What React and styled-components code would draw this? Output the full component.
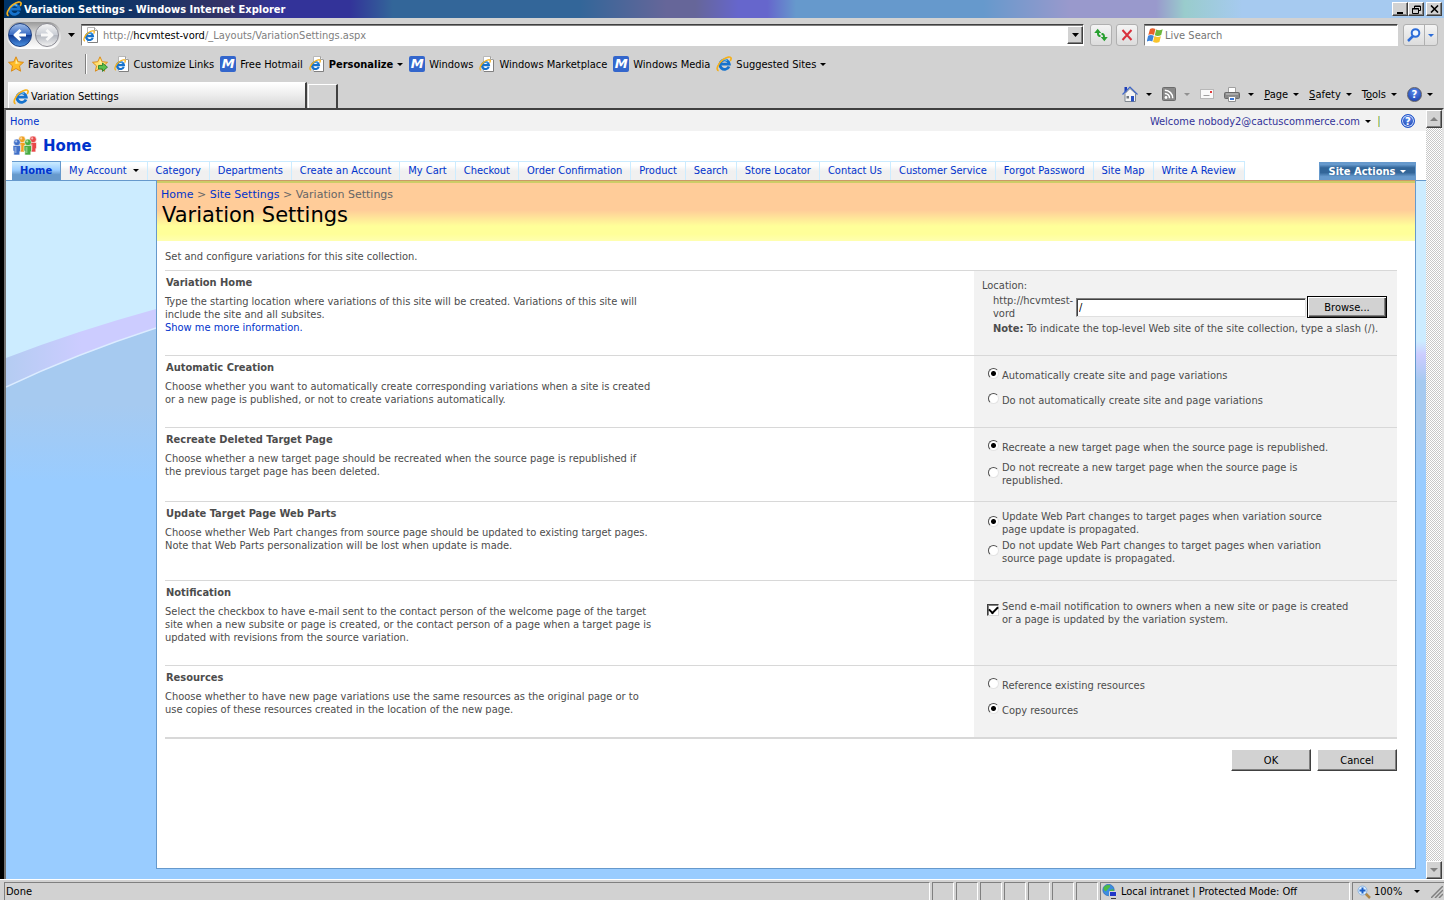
import React from 'react';
import styled, { createGlobalStyle, css } from 'styled-components';

const GlobalStyle = createGlobalStyle`
	* {
		box-sizing: border-box;
	}
	body {
		margin: 0;
		background: #d2d2d2;
		font: 11px/13px "DejaVu Sans Condensed", "Liberation Sans", sans-serif;
		color: #000;
	}
	button, input {
		font: inherit;
		color: inherit;
	}
	button {
		padding: 0;
	}
	a {
		text-decoration: none;
	}
	svg {
		display: block;
		flex: none;
	}
	p, h1, h2 {
		margin: 0;
	}
`;

/* window frame */

const Window = styled.div`
	display: flex;
	flex-direction: column;
	min-height: 100vh;
`;

const Frame = styled.div`
	flex: 1;
	display: flex;
	flex-direction: column;
	border-left: 4px solid #000;
`;

const TitleBar = styled.header`
	display: flex;
	align-items: center;
	gap: 2px;
	height: 18px;
	padding: 0 2px;
	color: #fff;
	font-weight: bold;
	background: linear-gradient(to right, #003366 5%, #333366 15%, #333399 19%, #333399 24%, #336699 27%, #336699 40%, #666699 46%, #666699 48%, #6666cc 51%, #6666cc 53%, #6699cc 55%, #6699cc 68%, #9999cc 74%, #9999cc 80%, #99cccc 82%, #a6caf0 86%);
`;

const TitleText = styled.span`
	flex: 1;
	white-space: nowrap;
`;

const raised = css`
	background: #d2d2d2;
	border: 1px solid;
	border-color: #fff #404040 #404040 #fff;
	box-shadow: inset -1px -1px 0 #808080;
`;

const WinButton = styled.button`
	${raised}
	display: flex;
	align-items: center;
	justify-content: center;
	width: 16px;
	height: 14px;
	margin-left: ${(p) => (p.$apart ? '0' : '-2px')};
`;

const NavRow = styled.div`
	display: flex;
	align-items: center;
	height: 34px;
	padding: 0 6px 0 3px;
`;

const TravelButtons = styled.div`
	display: flex;
	width: 54px;
	height: 27px;
	align-items: center;
	gap: 3px;
	padding: 0 1px;
	border-radius: 13px;
	background: linear-gradient(#999, #d8d8d8 40%, #fff);
`;

const RoundButton = styled.button`
	display: flex;
	align-items: center;
	justify-content: center;
	width: 24px;
	height: 24px;
	border: 1px solid ${(p) => (p.$off ? '#8c8c94' : '#1d3f80')};
	border-radius: 50%;
	background: ${(p) => (p.$off
		? 'linear-gradient(#f4f4f4, #c8ccd4 50%, #b4b8c0 52%, #f0f0f0)'
		: 'linear-gradient(#9dbbe8, #3a6cc4 48%, #123c94 52%, #4a90e0)')};
`;

const PlainButton = styled.button`
	display: flex;
	align-items: center;
	justify-content: center;
	gap: ${(p) => (p.$wide ? '8px' : '5px')};
	height: 20px;
	border: 0;
	background: none;
	white-space: nowrap;
`;

const HistoryButton = styled(PlainButton)`
	width: 20px;
`;

const sunken = css`
	background: #fff;
	border: 1px solid;
	border-color: #404040 #fff #fff #808080;
	box-shadow: inset 0 1px 0 #808080;
`;

const AddressBox = styled.div`
	${sunken}
	flex: 1;
	display: flex;
	align-items: center;
	gap: 4px;
	height: 22px;
	padding-left: 1px;
`;

const SearchInput = styled.input`
	flex: 1;
	min-width: 0;
	border: 0;
	outline: 0;
	background: none;
	padding: 0;
`;

const AddressText = styled.a`
	flex: 1;
	color: #808080;

	b {
		color: #000;
		font-weight: normal;
	}
`;

const DropButton = styled.button`
	${raised}
	display: flex;
	align-items: center;
	justify-content: center;
	width: 16px;
	height: 18px;
`;

const SoftButton = styled.button`
	display: flex;
	align-items: center;
	justify-content: center;
	width: 22px;
	height: 22px;
	border: 1px solid #b0b0b0;
	border-radius: 3px;
	background: linear-gradient(#f4f4f4, #dcdcdc);
	margin-left: ${(p) => p.$gap || 0}px;
`;

const SearchBox = styled.div`
	${sunken}
	display: flex;
	align-items: center;
	gap: 2px;
	width: 254px;
	height: 22px;
	margin-left: 6px;
	padding-left: 2px;
`;

const SearchButtons = styled.div`
	display: flex;
	margin-left: 5px;
	border: 1px solid #b0b0b0;
	border-radius: 3px;
	background: linear-gradient(#f4f4f4, #dcdcdc);

	button {
		display: flex;
		align-items: center;
		justify-content: center;
		height: 20px;
		width: 20px;
		border: 0;
		background: none;
	}
	button + button {
		width: 13px;
		border-left: 1px solid #b0b0b0;
	}
`;

const FavRow = styled.nav`
	display: flex;
	align-items: center;
	height: 24px;
	padding-left: 4px;
`;

const FavLink = styled.a`
	display: flex;
	align-items: center;
	gap: 4px;
	margin-right: 6px;
	color: #000;
	font-weight: ${(p) => (p.$bold ? 'bold' : 'normal')};
	white-space: nowrap;
`;

const Divider = styled.div`
	width: 2px;
	height: 20px;
	margin: 0 5px 0 6px;
	border-left: 1px solid #808080;
	border-right: 1px solid #fff;
`;

const TabRow = styled.div`
	display: flex;
	align-items: flex-end;
	height: 32px;
	padding-left: 4px;
`;

const BrowserTab = styled.button`
	display: flex;
	align-items: center;
	gap: 2px;
	width: 299px;
	height: 26px;
	padding: 2px 4px 0;
	border: 1px solid #fff;
	border-right: 2px solid #404040;
	border-bottom: 0;
	background: linear-gradient(#fff, #f0f0f0 40%, #d6d6d6);
`;

const NewTab = styled(BrowserTab)`
	width: 30px;
	height: 24px;
	margin-left: 1px;
	background: #d2d2d2;
`;

const CommandBar = styled.div`
	display: flex;
	align-items: center;
	gap: 10px;
	height: 28px;
	margin-left: auto;
	padding-right: 11px;
`;

/* site */

const Viewport = styled.div`
	flex: 1;
	display: flex;
	border: 2px solid;
	border-bottom: 0;
	border-color: #404040 #e4e4e4 #fff #707070;
`;

const Site = styled.div`
	flex: 1;
	min-width: 0;
	display: flex;
	flex-direction: column;
	background: #fff;
`;

const GlobalBar = styled.div`
	display: flex;
	align-items: center;
	height: 21px;
	padding: 1px 11px 0 4px;
	background: #f2f2f2;
`;

const BlueLink = styled.a`
	color: #0033cc;
`;

const Welcome = styled(PlainButton)`
	margin-left: auto;
	color: #333399;
`;

const Stroke = styled.span`
	width: 2px;
	height: 11px;
	margin: 0 21px 0 7px;
	border-left: 1px solid #cccc66;
	border-right: 1px solid #99cccc;
`;

const SiteTitle = styled.div`
	display: flex;
	align-items: center;
	gap: 6px;
	height: 30px;
	padding-left: 7px;
	font: bold 15px/20px "DejaVu Sans", sans-serif;
`;

const TopNav = styled.nav`
	display: flex;
	align-items: flex-end;
	height: 19px;
	padding: 0 10px 0 6px;
`;

const NavTab = styled.a`
	display: flex;
	align-items: center;
	gap: 6px;
	height: 19px;
	padding: 0 8px 2px;
	white-space: nowrap;
	border: 1px solid #ccecff;
	border-width: 1px 1px 0 0;
	color: #0033cc;
	background: linear-gradient(#fff 20%, #f0f0f0 50%);
	${(p) => p.$current && css`
		font-weight: bold;
		border-color: #6699cc;
		background: linear-gradient(#ccecff, #99ccff 45%, #6699cc 70%);
	`}
`;

const SiteActions = styled.button`
	display: flex;
	align-items: center;
	justify-content: center;
	gap: 5px;
	width: 97px;
	height: 18px;
	margin-left: auto;
	border: 1px solid #6699cc;
	color: #fff;
	font-weight: bold;
	white-space: nowrap;
	background: linear-gradient(#6699cc 10%, #336699 30%, #336699 60%, #6699cc 85%);
`;

const Body = styled.div`
	flex: 1;
	display: flex;
	background: #99ccff;
`;

const Sidebar = styled.aside`
	width: 150px;
	flex: none;
	border-top: 1px solid #6699cc;
`;

const Main = styled.main`
	flex: 1;
	min-width: 0;
	margin-bottom: 10px;
	background: #fff;
	border: 1px solid #6699cc;
	border-top: 0;
`;

const Edge = styled.div`
	width: 10px;
	flex: none;
	border-top: 1px solid #6699cc;
	background: linear-gradient(#ccecff 160px, #ccccff 174px, #a6caf0 200px, #a6caf0 240px, #99ccff 300px);
`;

const Banner = styled.div`
	height: 61px;
	padding: 7px 4px 0;
	border-top: 1px solid #cc9966;
	box-shadow: inset 0 2px 0 #cccc66;
	background: linear-gradient(#ffcc99 29px, #ffff99 45px, #ffff99 53px, #ffffb0);
`;

const Crumbs = styled.nav`
	font: 11px/14px "DejaVu Sans", sans-serif;
	color: #666;
`;

const PageTitle = styled.h1`
	font: 21px/26px "DejaVu Sans", sans-serif;
	padding-left: 1px;
`;

const Content = styled.form`
	padding: 9px 18px 0 8px;
	color: #4c4c4c;
`;

const Section = styled.section`
	display: grid;
	grid-template-columns: minmax(0, 1fr) 423px;
	min-height: ${(p) => p.$height}px;
	border-top: 1px solid #d8d8d8;
`;

const Sections = styled.div`
	margin-top: 7px;
	border-bottom: 2px solid #d8d8d8;
`;

const Description = styled.div`
	padding: 5px 0 0;

	h2 {
		font-size: 11px;
		line-height: 13px;
		margin: 0 0 6px 1px;
	}
`;

const Controls = styled.div`
	display: flex;
	flex-direction: column;
	gap: ${(p) => p.$gap || 0}px;
	padding: ${(p) => p.$top}px 10px 0 ${(p) => p.$left || 13}px;
	background: #f2f2f2;
`;

const Option = styled.label`
	display: flex;
	align-items: center;
	gap: 3px;
`;

const Radio = styled.input`
	appearance: none;
	flex: none;
	width: 11px;
	height: 11px;
	margin: 0 0 3px 1px;
	border: 1px solid;
	border-color: #505050 #e4e4e4 #e4e4e4 #505050;
	border-radius: 50%;
	background: #fff;

	&:checked {
		background: radial-gradient(circle, #000 2px, #fff 3px);
	}
`;

const Check = styled.input`
	appearance: none;
	flex: none;
	display: grid;
	place-items: center;
	width: 12px;
	height: 12px;
	margin: 0 0 7px;
	border: 1px solid;
	border-color: #404040 #d8d8d8 #d8d8d8 #404040;
	box-shadow: inset 1px 1px 0 #808080;
	background: #fff;

	&:checked::after {
		content: '';
		width: 7px;
		height: 4px;
		margin-bottom: 2px;
		border: solid #000;
		border-width: 0 0 2px 2px;
		transform: rotate(-45deg);
	}
`;

const LocationRow = styled.div`
	display: grid;
	grid-template-columns: 83px minmax(0, 1fr) 80px;
	align-items: center;
	margin: 2px 0 2px 11px;
`;

const PathInput = styled.input`
	height: 19px;
	min-width: 0;
	margin-right: 1px;
	padding: 0 2px;
	border: 1px solid;
	border-color: #808080 #e0e0e0 #e0e0e0 #808080;
	box-shadow: inset 1px 1px 0 #404040;
	background: #fff;
	color: #000;
`;

const Note = styled.p`
	margin-left: 11px;
	white-space: nowrap;
`;

const Button = styled.button`
	${raised}
	width: 80px;
	height: 22px;
	color: #000;
	${(p) => p.$default && css`
		border-color: #000;
		box-shadow: inset 1px 1px 0 #fff, inset -1px -1px 0 #404040, inset -2px -2px 0 #808080;
	`}
`;

const Actions = styled.div`
	display: flex;
	justify-content: flex-end;
	gap: 6px;
	padding-top: 10px;
`;

const Scrollbar = styled.div`
	display: flex;
	flex-direction: column;
	justify-content: space-between;
	width: 16px;
	background: repeating-conic-gradient(#fff 0 25%, #c8c8c8 0 50%) 0 0 / 2px 2px;
`;

/* status bar */

const StatusBar = styled.footer`
	display: flex;
	gap: 2px;
	height: 21px;
	padding: 2px 0 0 4px;
	border-top: 1px solid #fff;
`;

const Panel = styled.div`
	display: flex;
	align-items: center;
	gap: 3px;
	flex: ${(p) => (p.$width ? 'none' : 1)};
	width: ${(p) => (p.$width ? p.$width + 'px' : 'auto')};
	padding: 0 1px;
	border: 1px solid #808080;
	border-bottom: 0;
	border-right-color: #fff;
	white-space: nowrap;
`;

const ZoomPanel = styled(Panel)`
	padding-left: 4px;
	border-right: 0;

	button {
		margin: 0 auto;
	}
`;

/* icons */

const Caret = ({ color = '#000', size = 6 }) => (
	<svg width={size} height={Math.ceil(size / 2)} viewBox="0 0 6 3" preserveAspectRatio="none" aria-hidden="true">
		<path d="M0 0h6L3 3z" fill={color} />
	</svg>
);

const IeMark = () => (
	<>
		<path d="M13 10.400A4.700 4.700 0 1 1 13.300 8.200H5" fill="none" stroke="#1672cc" strokeWidth="2.800" />
		<path d="M4.600 5.800a4.500 4.500 0 0 1 6.500-1.200" fill="none" stroke="#6cc4f8" strokeWidth="1.200" />
		<path d="M2.600 14.800C-.6 14 2 7.200 7 3.600 10.800.8 14.800.200 15.100 2.200c.1.900-.4 1.900-.9 2.800" fill="none" stroke="#f4b01c" strokeWidth="1.700" />
	</>
);

const IeIcon = () => (
	<svg width="16" height="16" viewBox="0 0 16 16" aria-hidden="true"><IeMark /></svg>
);

const PageIcon = () => (
	<svg width="16" height="16" viewBox="0 0 16 16" aria-hidden="true">
		<path d="M4.500.5h7l3 3v12h-10z" fill="#fff" stroke="#b8b8b8" />
		<path d="M14.500 4v11.500H5" fill="none" stroke="#808080" />
		<path d="M11.500.5v3h3" fill="#eee" stroke="#a0a0a0" />
		<g transform="translate(0 3) scale(.75)"><IeMark /></g>
	</svg>
);

const MBadge = styled.span`
	width: 16px;
	height: 16px;
	border-radius: 2px;
	background: #3366cc;
	color: #fff;
	font: italic bold 13px/16px "DejaVu Sans", sans-serif;
	text-align: center;
`;

const starPath = 'M8 .8l2.200 4.900 5.300.6-4 3.600 1.100 5.300L8 12.500l-4.600 2.700 1.100-5.300-4-3.600 5.300-.6z';

const Star = ({ arrow }) => (
	<svg width="16" height="16" viewBox="0 0 16 16" aria-hidden="true">
		<path d={starPath} fill={arrow ? '#ffe070' : '#ffbc28'} stroke="#d88410" strokeWidth=".9" />
		<path d="M8 3l1.400 3.600 3 .4-5 1z" fill="#fff0a0" />
		{arrow && <path d="M6.500 9.500h4V7l5 4.200-5 4.200V13h-4z" fill="#5cc04c" stroke="#207828" strokeWidth=".8" />}
	</svg>
);

const ArrowIcon = ({ back, color }) => (
	<svg width="16" height="14" viewBox="0 0 16 14" aria-hidden="true">
		<path
			d={back ? 'M14 7H4M8.500 2L3 7l5.500 5' : 'M2 7h10M7.500 2L13 7l-5.500 5'}
			fill="none" stroke={color} strokeWidth="3" strokeLinejoin="round"
		/>
	</svg>
);

const RefreshIcon = () => (
	<svg width="16" height="14" viewBox="0 0 16 14" aria-hidden="true">
		<path d="M7.500 9C4.500 9 4 7 4 5H1.200L4.700.8 8.200 5H6c0 1.600.3 2 1.500 2z" fill="#28a030" />
		<path d="M8.500 5c3 0 3.500 2 3.500 4h2.800l-3.500 4.200L7.800 9H10c0-1.600-.3-2-1.500-2z" fill="#28a030" />
	</svg>
);

const StopIcon = () => (
	<svg width="12" height="12" viewBox="0 0 12 12" aria-hidden="true">
		<path d="M1.500 1l9 10M10.500 1l-9 10" stroke="#d8303c" strokeWidth="2" />
	</svg>
);

const FlagIcon = () => (
	<svg width="16" height="15" viewBox="0 0 16 15" aria-hidden="true">
		<path d="M3 1Q5.500-.5 8.400 1L7 6.900Q4 5.500 1.300 6.900z" fill="#e8602c" />
		<path d="M9.200 1.500q3 1.500 6.500-.2l-1.500 5.700Q10.800 8.700 7.800 7.200z" fill="#6cb83c" />
		<path d="M1.100 7.700q2.700-1.500 5.700 0L5.300 13.500Q2.700 12-.2 13.500z" fill="#3c84dc" />
		<path d="M7.500 8.100q3.200 1.700 6.400.1l-1.500 5.800q-3.200 1.500-6.400-.2z" fill="#f8c42c" />
	</svg>
);

const Lens = ({ plus }) => (
	<svg width="14" height="14" viewBox="0 0 14 14" aria-hidden="true">
		{plus ? (
			<>
				<path d="M8 8l5 5" stroke="#b08848" strokeWidth="2.500" />
				<circle cx="5.500" cy="5.500" r="4.500" fill="#d8ecff" stroke="#8cb4e0" />
				<path d="M5.500 2.500v6M2.500 5.500h6" stroke="#1c60c8" strokeWidth="2" />
			</>
		) : (
			<>
				<path d="M6 8l-5 5" stroke="#2c6cd8" strokeWidth="2.500" />
				<circle cx="8.500" cy="5" r="3.800" fill="#eef6ff" stroke="#2c6cd8" strokeWidth="2" />
			</>
		)}
	</svg>
);

const HomeIcon = () => (
	<svg width="16" height="16" viewBox="0 0 16 16" aria-hidden="true">
		<path d="M3 7.500l5-5 5.500 5v8H3z" fill="#f4f4f4" stroke="#808890" />
		<path d="M2.500 1h2.500v4L2.500 7z" fill="#1c3cb8" />
		<path d="M.5 8.500L8 1l7.500 7.500" fill="none" stroke="#4068c8" strokeWidth="1.200" />
		<path d="M9 10h3v5.500H9z" fill="#2850c0" />
		<path d="M4.500 10h2.500v2.500H4.500z" fill="#707880" />
	</svg>
);

const FeedIcon = () => (
	<svg width="14" height="14" viewBox="0 0 14 14" aria-hidden="true">
		<rect x=".5" y=".5" width="13" height="13" rx="1" fill="#888" stroke="#6c6c6c" />
		<circle cx="4" cy="10.500" r="1.400" fill="#fff" />
		<path d="M2.800 6.500a4.500 4.500 0 0 1 4.700 4.800M2.800 3.300a7.800 7.800 0 0 1 7.900 8" fill="none" stroke="#fff" strokeWidth="1.500" />
	</svg>
);

const MailIcon = () => (
	<svg width="14" height="10" viewBox="0 0 14 10" aria-hidden="true">
		<rect x=".5" y=".5" width="13" height="9" fill="#fafafa" stroke="#b8b8b8" />
		<path d="M10 2h2v2h-2z" fill="#e03c3c" />
		<path d="M3.500 6.500h6" stroke="#a0a0a0" />
	</svg>
);

const PrinterIcon = () => (
	<svg width="16" height="15" viewBox="0 0 16 15" aria-hidden="true">
		<path d="M4.500.5h7v5h-7z" fill="#fff" stroke="#a0a0a0" />
		<rect x=".5" y="5.500" width="15" height="6" rx="1" fill="#888" stroke="#686868" />
		<path d="M2 7h12" stroke="#ccc" />
		<path d="M4.500 9.500h7v5h-7z" fill="#fff" stroke="#909090" />
		<path d="M6 12h4" stroke="#3c78d8" strokeWidth="2" />
	</svg>
);

const HelpBadge = styled.span`
	width: ${(p) => (p.$ring ? '14px' : '15px')};
	height: ${(p) => (p.$ring ? '14px' : '15px')};
	border-radius: 50%;
	border: 1px solid ${(p) => (p.$ring ? '#1c50c8' : '#606068')};
	background: radial-gradient(circle at 50% 30%, #5c8cec, #1438a8);
	box-shadow: ${(p) => (p.$ring ? 'inset 0 0 0 1px #cfe0ff' : 'none')};
	color: #fff;
	font: bold 10px/13px "DejaVu Sans", sans-serif;
	text-align: center;
`;

const people = [
	{ x: 9, y: 0, color: '#f0a020' },
	{ x: 20, y: 0, color: '#e84848' },
	{ x: 4, y: 3, color: '#4070c8' },
	{ x: 15, y: 3, color: '#48ac40' },
];

const PeopleIcon = () => (
	<svg width="24" height="20" viewBox="0 0 24 20" aria-hidden="true">
		{people.map((p) => (
			<g key={p.color} transform={`translate(${p.x} ${p.y})`} fill={p.color}>
				<path d="M-4 6.500h7.500v6H2.800V16h-6v-4H-4z" stroke="#fff" strokeWidth=".6" />
				<circle cy="3.400" r="3.300" stroke="#fff" strokeWidth=".5" />
				<circle cx="-.8" cy="2.400" r="1.100" fill="#fff" opacity=".6" />
				<path d="M-2.500 8h2v6h-2z" fill="#fff" opacity=".35" />
			</g>
		))}
	</svg>
);

const GlobeIcon = () => (
	<svg width="16" height="16" viewBox="0 0 16 16" aria-hidden="true">
		<circle cx="6.500" cy="6" r="5.700" fill="#3c8ce0" stroke="#2060b0" strokeWidth=".6" />
		<path d="M2 3c2-2 5-2.500 6-1.500S7 4 6 5 4 8 3 7s-2-2-1-4zM8 6l3-1 1 2-2 3-2-1z" fill="#4cbc44" />
		<path d="M7.500 7.500h7v5h-7z" fill="#2038c8" stroke="#d8d8d8" />
		<path d="M9 14.500h5" stroke="#404040" />
	</svg>
);

const Swoosh = () => (
	<svg width="100%" height="300" viewBox="0 0 150 300" preserveAspectRatio="none" aria-hidden="true">
		<defs>
			<linearGradient id="haze" x1="0" y1="0" x2="0" y2="1">
				<stop offset="0" stopColor="#a6caf0" />
				<stop offset=".5" stopColor="#a6caf0" />
				<stop offset="1" stopColor="#99ccff" />
			</linearGradient>
			<linearGradient id="band" x1="0" y1="0" x2="1" y2="0">
				<stop offset="0" stopColor="#b4ccf2" />
				<stop offset=".5" stopColor="#ccccff" />
				<stop offset="1" stopColor="#ccccff" />
			</linearGradient>
		</defs>
		<path d="M0 0h150v300H0z" fill="#ccecff" />
		<path d="M0 177Q70 150 150 128v20Q70 173 0 207z" fill="url(#band)" />
		<path d="M0 206Q70 173 150 147v153H0z" fill="url(#haze)" />
		<path d="M0 206Q70 173 150 147" fill="none" stroke="#dcecff" strokeWidth="1.500" />
	</svg>
);

/* data */

const favorites = [
	{ label: 'Customize Links', icon: <PageIcon /> },
	{ label: 'Free Hotmail', icon: <MBadge>M</MBadge> },
	{ label: 'Personalize', icon: <PageIcon />, bold: true, menu: true },
	{ label: 'Windows', icon: <MBadge>M</MBadge> },
	{ label: 'Windows Marketplace', icon: <PageIcon /> },
	{ label: 'Windows Media', icon: <MBadge>M</MBadge> },
	{ label: 'Suggested Sites', icon: <IeIcon />, menu: true },
];

const navTabs = [
	'Category', 'Departments', 'Create an Account', 'My Cart', 'Checkout',
	'Order Confirmation', 'Product', 'Search', 'Store Locator', 'Contact Us',
	'Customer Service', 'Forgot Password', 'Site Map', 'Write A Review',
];

const optionSections = [
	{
		title: 'Automatic Creation',
		text: ['Choose whether you want to automatically create corresponding variations when a site is created', 'or a new page is published, or not to create variations automatically.'],
		name: 'auto', height: 72, top: 12, gap: 11, selected: 0,
		options: [['Automatically create site and page variations'], ['Do not automatically create site and page variations']],
	},
	{
		title: 'Recreate Deleted Target Page',
		text: ['Choose whether a new target page should be recreated when the source page is republished if', 'the previous target page has been deleted.'],
		name: 'recreate', height: 74, top: 12, gap: 7, selected: 0,
		options: [['Recreate a new target page when the source page is republished.'], ['Do not recreate a new target page when the source page is', 'republished.']],
	},
	{
		title: 'Update Target Page Web Parts',
		text: ['Choose whether Web Part changes from source page should be updated to existing target pages.', 'Note that Web Parts personalization will be lost when update is made.'],
		name: 'update', height: 79, top: 8, gap: 3, selected: 0,
		options: [['Update Web Part changes to target pages when variation source', 'page update is propagated.'], ['Do not update Web Part changes to target pages when variation', 'source page update is propagated.']],
	},
	{
		title: 'Notification',
		text: ['Select the checkbox to have e-mail sent to the contact person of the welcome page of the target', 'site when a new subsite or page is created, or the contact person of a page when a target page is', 'updated with revisions from the source variation.'],
		name: 'notify', height: 85, top: 19, checkbox: true, selected: 0,
		options: [['Send e-mail notification to owners when a new site or page is created', 'or a page is updated by the variation system.']],
	},
	{
		title: 'Resources',
		text: ['Choose whether to have new page variations use the same resources as the original page or to', 'use copies of these resources created in the location of the new page.'],
		name: 'resources', height: 72, top: 12, gap: 11, selected: 1,
		options: [['Reference existing resources'], ['Copy resources']],
	},
];

const Lines = ({ of }) => of.map((line, i) => (
	<React.Fragment key={line}>
		{i > 0 && <br />}
		{line}
	</React.Fragment>
));

const OptionSection = ({ title, text, name, height, top, gap, selected, checkbox, options }) => (
	<Section $height={height}>
		<Description>
			<h2>{title}</h2>
			<p><Lines of={text} /></p>
		</Description>
		<Controls $top={top} $gap={gap}>
			{options.map((option, i) => (
				<Option key={option[0]}>
					{checkbox
						? <Check type="checkbox" name={name} defaultChecked={i === selected} />
						: <Radio type="radio" name={name} defaultChecked={i === selected} />}
					<span><Lines of={option} /></span>
				</Option>
			))}
		</Controls>
	</Section>
);

const BrowserChrome = () => (
	<>
		<TitleBar>
			<IeIcon />
			<TitleText>Variation Settings - Windows Internet Explorer</TitleText>
			<WinButton aria-label="Minimize">
				<svg width="9" height="9"><path d="M1 7h6v2H1z" /></svg>
			</WinButton>
			<WinButton aria-label="Restore">
				<svg width="9" height="9"><path d="M2.500 3V1h6v4.500H6.500M.5 3.500h6v5h-6zM2 1.500h7M0 4h7" fill="none" stroke="#000" /></svg>
			</WinButton>
			<WinButton aria-label="Close" $apart>
				<svg width="9" height="8"><path d="M1 .5l7 7M8 .5l-7 7" stroke="#000" strokeWidth="1.600" /></svg>
			</WinButton>
		</TitleBar>
		<NavRow>
			<TravelButtons>
				<RoundButton aria-label="Back"><ArrowIcon back color="#fff" /></RoundButton>
				<RoundButton aria-label="Forward" $off><ArrowIcon color="#f8f8f8" /></RoundButton>
			</TravelButtons>
			<HistoryButton aria-label="Recent pages"><Caret size={7} /></HistoryButton>
			<AddressBox>
				<PageIcon />
				<AddressText href="#address">http://<b>hcvmtest-vord</b>/_Layouts/VariationSettings.aspx</AddressText>
				<DropButton aria-label="Show address list"><Caret size={7} /></DropButton>
			</AddressBox>
			<SoftButton aria-label="Refresh" $gap={6}><RefreshIcon /></SoftButton>
			<SoftButton aria-label="Stop" $gap={4}><StopIcon /></SoftButton>
			<SearchBox>
				<FlagIcon />
				<SearchInput placeholder="Live Search" aria-label="Live Search" />
			</SearchBox>
			<SearchButtons>
				<button aria-label="Search"><Lens /></button>
				<button aria-label="Search options"><Caret color="#2c6cd8" /></button>
			</SearchButtons>
		</NavRow>
		<FavRow>
			<FavLink href="#favorites"><Star />Favorites</FavLink>
			<Divider />
			<FavLink href="#add" aria-label="Add to favorites"><Star arrow /></FavLink>
			{favorites.map((f) => (
				<FavLink key={f.label} href="#link" $bold={f.bold}>
					{f.icon}
					{f.label}
					{f.menu && <Caret />}
				</FavLink>
			))}
		</FavRow>
		<TabRow>
			<BrowserTab><IeIcon />Variation Settings</BrowserTab>
			<NewTab aria-label="New tab" />
			<CommandBar>
				<PlainButton $wide aria-label="Home page"><HomeIcon /><Caret /></PlainButton>
				<PlainButton $wide aria-label="Feeds"><FeedIcon /><Caret color="#909090" /></PlainButton>
				<PlainButton aria-label="Read mail"><MailIcon /></PlainButton>
				<PlainButton $wide aria-label="Print"><PrinterIcon /><Caret /></PlainButton>
				<PlainButton><span><u>P</u>age</span><Caret /></PlainButton>
				<PlainButton><span><u>S</u>afety</span><Caret /></PlainButton>
				<PlainButton><span>T<u>o</u>ols</span><Caret /></PlainButton>
				<PlainButton aria-label="Help"><HelpBadge>?</HelpBadge><Caret /></PlainButton>
			</CommandBar>
		</TabRow>
	</>
);

const SettingsForm = () => (
	<Content onSubmit={(e) => e.preventDefault()}>
		<p>Set and configure variations for this site collection.</p>
		<Sections>
			<Section $height={85}>
				<Description>
					<h2>Variation Home</h2>
					<p>
						<Lines of={['Type the starting location where variations of this site will be created. Variations of this site will', 'include the site and all subsites.']} />
						<br />
						<BlueLink href="#more">Show me more information.</BlueLink>
					</p>
				</Description>
				<Controls $top={8} $left={8}>
					<label htmlFor="location">Location:</label>
					<LocationRow>
						<span>http://hcvmtest-<br />vord</span>
						<PathInput id="location" type="text" defaultValue="/" />
						<Button type="button" $default>Browse...</Button>
					</LocationRow>
					<Note><b>Note:</b> To indicate the top-level Web site of the site collection, type a slash (/).</Note>
				</Controls>
			</Section>
			{optionSections.map((section) => <OptionSection key={section.name} {...section} />)}
		</Sections>
		<Actions>
			<Button type="submit">OK</Button>
			<Button type="button">Cancel</Button>
		</Actions>
	</Content>
);

const App = () => {
	return (
		<Window>
			<GlobalStyle />
			<Frame>
				<BrowserChrome />
				<Viewport>
					<Site>
						<GlobalBar>
							<BlueLink href="#home">Home</BlueLink>
							<Welcome>Welcome nobody2@cactuscommerce.com <Caret /></Welcome>
							<Stroke />
							<HelpBadge $ring>?</HelpBadge>
						</GlobalBar>
						<SiteTitle>
							<PeopleIcon />
							<BlueLink href="#home">Home</BlueLink>
						</SiteTitle>
						<TopNav>
							<NavTab href="#home" $current>Home</NavTab>
							<NavTab href="#account">My Account <Caret /></NavTab>
							{navTabs.map((tab) => <NavTab key={tab} href="#tab">{tab}</NavTab>)}
							<SiteActions>Site Actions <Caret color="#fff" /></SiteActions>
						</TopNav>
						<Body>
							<Sidebar><Swoosh /></Sidebar>
							<Main>
								<Banner>
									<Crumbs>
										<BlueLink href="#home">Home</BlueLink> &gt; <BlueLink href="#settings">Site Settings</BlueLink> &gt; Variation Settings
									</Crumbs>
									<PageTitle>Variation Settings</PageTitle>
								</Banner>
								<SettingsForm />
							</Main>
							<Edge />
						</Body>
					</Site>
					<Scrollbar>
						<DropButton aria-label="Scroll up">
							<svg width="8" height="4"><path d="M0 4h8L4 0z" fill="#808080" /></svg>
						</DropButton>
						<DropButton aria-label="Scroll down"><Caret color="#808080" size={8} /></DropButton>
					</Scrollbar>
				</Viewport>
			</Frame>
			<StatusBar>
				<Panel>Done</Panel>
				{[1, 2, 3, 4, 5, 6, 7].map((n) => <Panel key={n} $width={22} />)}
				<Panel $width={250}><GlobeIcon />Local intranet | Protected Mode: Off</Panel>
				<ZoomPanel $width={92}>
					<Lens plus />
					100%
					<PlainButton aria-label="Change zoom level"><Caret /></PlainButton>
					<svg width="12" height="12"><path d="M0 12L12 0M4 12l8-8M8 12l4-4" stroke="#808080" strokeWidth="1.500" /></svg>
				</ZoomPanel>
			</StatusBar>
		</Window>
	);
};

export default App;
